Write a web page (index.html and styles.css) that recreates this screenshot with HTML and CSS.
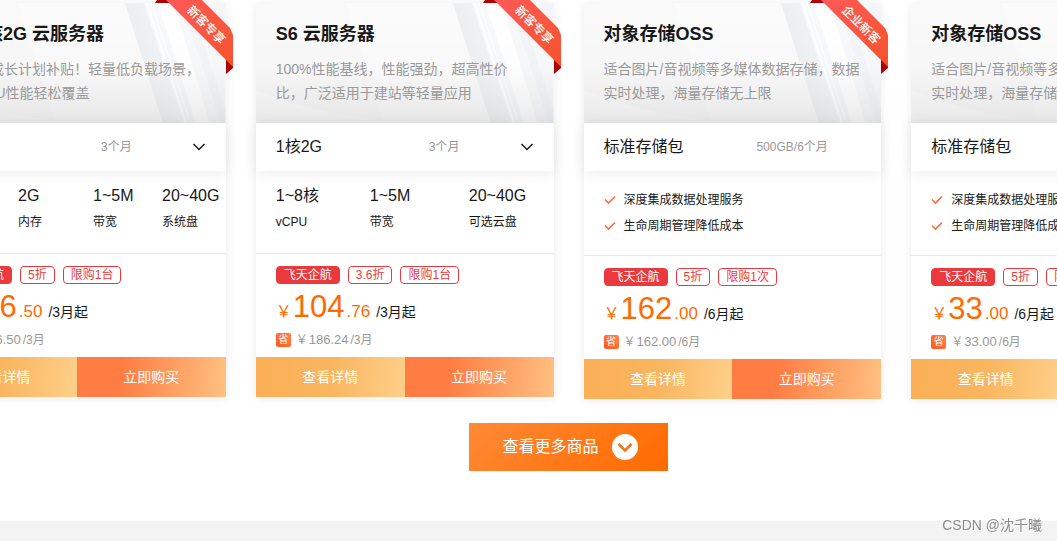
FILE: index.html
```html
<!DOCTYPE html>
<html lang="zh-CN">
<head>
<meta charset="utf-8">
<meta name="viewport" content="width=device-width, initial-scale=1">
<title>云产品特惠</title>
<link rel="stylesheet" href="styles.css">
</head>
<body>
<svg class="sprite" aria-hidden="true">
  <defs>
    <linearGradient id="fade" x1="0" y1="0" x2="0" y2="1"><stop offset="0" stop-color="#000" stop-opacity="0"/><stop offset=".55" stop-color="#000" stop-opacity=".01"/><stop offset="1" stop-color="#000" stop-opacity=".08"/></linearGradient>
    <linearGradient id="band"><stop offset="0" stop-color="#eceef0"/><stop offset="1" stop-color="#f5f6f8"/></linearGradient>
    <linearGradient id="red" x1="0" y1="0" x2="1" y2="1"><stop offset="0" stop-color="#ff5a5a"/><stop offset="1" stop-color="#f5532d"/></linearGradient>
    <symbol id="sheen" viewBox="0 0 298 120" preserveAspectRatio="none">
      <path d="M0 0H298V120H0Z" fill="#f9f9f9"/>
      <path d="M90 0H298V120H128Z" fill="#fbfbfb"/>
      <path d="M0 87Q60 112 150 120H0Z" fill="#fcfcfc"/>
      <path d="M197 0H216L256 120H235Z" fill="url(#band)"/>
      <path d="M216 0H298V120H256Z" fill="#f8f9fb"/>
      <path d="M218 0H220L259 120H257ZM223 0H224L263 120H262ZM230 0H246L282 120H268Z" fill="#fff"/>
      <path d="M254 0H262L298 108V120H293ZM284 0H298V36Z" fill="#f3f5f8"/>
      <path d="M0 0H298V120H0Z" fill="url(#fade)"/>
    </symbol>
    <symbol id="ribbon" viewBox="0 0 78 78">
      <path d="M0 6L4 0H14V6ZM71 62V77L78 71V66Z" fill="#b00000"/>
      <path d="M8 0H44L75 31L78 38V70Z" fill="url(#red)"/>
    </symbol>
    <symbol id="down" viewBox="0 0 14 8"><path d="M1.500 1L7 6.500L12.500 1" fill="none" stroke="currentColor" stroke-width="1.500"/></symbol>
    <symbol id="tick" viewBox="0 0 12 10"><path d="M1 4.500L4.500 8L11 1.500" fill="none" stroke="#ff6a3a" stroke-width="1.600"/></symbol>
  </defs>
</svg>
<main class="promo">
  <div class="stage">
    <div class="cards">
      <article class="card">
        <header class="head">
          <svg class="sheen" aria-hidden="true"><use href="#sheen"/></svg>
          <h2 class="title">S6 1核2G 云服务器</h2>
          <p class="desc">开发者成长计划补贴！轻量低负载场景，<br>满足CPU性能轻松覆盖</p>
          <div class="corner"><svg class="ribbon" aria-hidden="true"><use href="#ribbon"/></svg><span class="corner-text">新客专享</span></div>
        </header>
        <button class="config" type="button"><span class="model">1核2G</span><span class="term">3个月</span><svg class="down" aria-hidden="true"><use href="#down"/></svg></button>
        <dl class="specs specs-fixed">
          <div><dt>1核</dt><dd>vCPU</dd></div><div><dt>2G</dt><dd>内存</dd></div><div><dt>1~5M</dt><dd>带宽</dd></div><div><dt>20~40G</dt><dd>系统盘</dd></div>
        </dl>
        <div class="offer">
          <div class="tags"><span class="tag tag-solid">飞天企航</span><span class="tag">5折</span><span class="tag">限购1台</span></div>
          <p class="price"><span class="yen">￥</span><span class="whole">126</span><span class="cents">.50</span><span class="per">/3月起</span></p>
          <p class="saving"><span class="save">省</span><span>￥</span><span class="was">126.50</span><span>/3月</span></p>
        </div>
        <div class="actions"><button class="detail" type="button">查看详情</button><button class="buy" type="button">立即购买</button></div>
      </article>

      <article class="card">
        <header class="head">
          <svg class="sheen" aria-hidden="true"><use href="#sheen"/></svg>
          <h2 class="title">S6 云服务器</h2>
          <p class="desc">100%性能基线，性能强劲，超高性价<br>比，广泛适用于建站等轻量应用</p>
          <div class="corner"><svg class="ribbon" aria-hidden="true"><use href="#ribbon"/></svg><span class="corner-text">新客专享</span></div>
        </header>
        <button class="config" type="button"><span class="model">1核2G</span><span class="term">3个月</span><svg class="down" aria-hidden="true"><use href="#down"/></svg></button>
        <dl class="specs specs-range">
          <div><dt>1~8核</dt><dd>vCPU</dd></div><div><dt>1~5M</dt><dd>带宽</dd></div><div><dt>20~40G</dt><dd>可选云盘</dd></div>
        </dl>
        <div class="offer">
          <div class="tags"><span class="tag tag-solid">飞天企航</span><span class="tag">3.6折</span><span class="tag">限购1台</span></div>
          <p class="price"><span class="yen">￥</span><span class="whole">104</span><span class="cents">.76</span><span class="per">/3月起</span></p>
          <p class="saving"><span class="save">省</span><span>￥</span><span class="was">186.24</span><span>/3月</span></p>
        </div>
        <div class="actions"><button class="detail" type="button">查看详情</button><button class="buy" type="button">立即购买</button></div>
      </article>

      <article class="card">
        <header class="head">
          <svg class="sheen" aria-hidden="true"><use href="#sheen"/></svg>
          <h2 class="title">对象存储OSS</h2>
          <p class="desc">适合图片/音视频等多媒体数据存储，数据<br>实时处理，海量存储无上限</p>
          <div class="corner"><svg class="ribbon" aria-hidden="true"><use href="#ribbon"/></svg><span class="corner-text">企业新客</span></div>
        </header>
        <div class="config"><span class="model">标准存储包</span><span class="term">500GB/6个月</span></div>
        <ul class="features">
          <li><svg class="tick" aria-hidden="true"><use href="#tick"/></svg>深度集成数据处理服务</li>
          <li><svg class="tick" aria-hidden="true"><use href="#tick"/></svg>生命周期管理降低成本</li>
        </ul>
        <div class="offer">
          <div class="tags"><span class="tag tag-solid">飞天企航</span><span class="tag">5折</span><span class="tag">限购1次</span></div>
          <p class="price"><span class="yen">￥</span><span class="whole">162</span><span class="cents">.00</span><span class="per">/6月起</span></p>
          <p class="saving"><span class="save">省</span><span>￥</span><span class="was">162.00</span><span>/6月</span></p>
        </div>
        <div class="actions"><button class="detail" type="button">查看详情</button><button class="buy" type="button">立即购买</button></div>
      </article>

      <article class="card">
        <header class="head">
          <svg class="sheen" aria-hidden="true"><use href="#sheen"/></svg>
          <h2 class="title">对象存储OSS</h2>
          <p class="desc">适合图片/音视频等多媒体数据存储，数据<br>实时处理，海量存储无上限</p>
        </header>
        <div class="config"><span class="model">标准存储包</span></div>
        <ul class="features">
          <li><svg class="tick" aria-hidden="true"><use href="#tick"/></svg>深度集成数据处理服务</li>
          <li><svg class="tick" aria-hidden="true"><use href="#tick"/></svg>生命周期管理降低成本</li>
        </ul>
        <div class="offer">
          <div class="tags"><span class="tag tag-solid">飞天企航</span><span class="tag">5折</span><span class="tag">限购1次</span></div>
          <p class="price"><span class="yen">￥</span><span class="whole">33</span><span class="cents">.00</span><span class="per">/6月起</span></p>
          <p class="saving"><span class="save">省</span><span>￥</span><span class="was">33.00</span><span>/6月</span></p>
        </div>
        <div class="actions"><button class="detail" type="button">查看详情</button><button class="buy" type="button">立即购买</button></div>
      </article>
    </div>
    <button class="more" type="button">查看更多商品
      <svg class="more-icon" viewBox="0 0 26 26" aria-hidden="true"><circle cx="13" cy="13" r="13" fill="#fff"/><path d="M6.500 10L13 16.500L19.500 10" fill="none" stroke="#ff6f10" stroke-width="2.500"/></svg>
    </button>
  </div>
</main>
<span class="watermark">CSDN @沈千曦</span>
</body>
</html>
```
FILE: styles.css
```css
* { box-sizing: border-box; }
body {
  margin: 0;
  min-height: 100vh;
  background: #f3f3f3;
  color: #181818;
  font: 12px/20px "Liberation Sans", "Noto Sans CJK SC", sans-serif;
}
h2, p, dl, dd, ul { margin: 0; padding: 0; }
button { border: 0; padding: 0; color: inherit; font: inherit; cursor: pointer; }
.sprite { position: absolute; width: 0; height: 0; }

.promo { overflow: hidden; background: #fff; }
.stage {
  display: flex;
  flex-direction: column;
  align-items: center;
  gap: 24px;
  margin: 0 -152px 0 -72px;
  padding: 3px 0 50px;
}
.cards {
  display: grid;
  grid-template-columns: repeat(4, minmax(0, 1fr));
  align-items: start;
  gap: 30px;
  width: 100%;
}
.card { background: #fff; box-shadow: 0 1px 10px rgba(0, 0, 0, .08); }

.head { position: relative; padding: 18px 20px; white-space: nowrap; }
.sheen { position: absolute; inset: 0; width: 100%; height: 100%; }
.title { position: relative; margin-bottom: 10px; font-size: 18px; line-height: 26px; }
.desc { position: relative; color: #999; font-size: 14px; line-height: 24px; }
.corner { position: absolute; top: -6px; right: -7px; width: 78px; height: 78px; }
.ribbon { display: block; width: 100%; height: 100%; }
.corner-text {
  position: absolute;
  top: 18px;
  left: 27px;
  color: #fff;
  font-weight: 500;
  line-height: 20px;
  transform: rotate(45deg);
}

.config {
  position: relative;
  display: grid;
  grid-template-columns: 153px 1fr auto;
  align-items: center;
  width: 100%;
  height: 48px;
  padding: 0 20px;
  background: #fff;
  box-shadow: 0 2px 14px rgba(0, 0, 0, .08);
  text-align: left;
}
.model { font-size: 16px; }
.term { color: #999; }
.down { width: 14px; height: 8px; }

.specs { display: grid; padding: 13px 0 21px 20px; border-bottom: 1px solid #ebebeb; }
.specs-fixed { grid-template-columns: 70px 75px 69px 1fr; }
.specs-range { grid-template-columns: 94px 99px 1fr; }
.specs dt { margin-bottom: 4px; font-size: 16px; line-height: 24px; }

.features { padding: 16px 20px; border-bottom: 1px solid #ebebeb; list-style: none; line-height: 26px; }
.features li { display: flex; align-items: center; gap: 8px; }
.tick { width: 12px; height: 10px; }

.offer { padding: 12px 20px 7px; white-space: nowrap; }
.tags { display: flex; gap: 8px; }
.tag {
  height: 18px;
  padding: 0 7px;
  border: 1px solid #eb3a3d;
  border-radius: 4px;
  color: #eb3a3d;
  line-height: 17px;
}
.tag-solid { background: #eb3a3d; color: #fff; }
.price { display: flex; align-items: baseline; height: 36px; margin: 5px 0; color: #ff6a00; line-height: 36px; }
.yen { margin-right: 1px; font-size: 16px; }
.whole { font-size: 31px; }
.cents { margin-left: 2px; font-size: 17px; }
.per { margin-left: 6px; color: #181818; font-size: 14px; }
.saving { display: flex; align-items: center; color: #999; }
.save {
  width: 15px;
  height: 14px;
  margin-right: 5px;
  border-radius: 2px;
  background: linear-gradient(45deg, #ff5722, #ff8548);
  color: #fff;
  font-size: 10px;
  line-height: 14px;
  text-align: center;
}
.was { margin: 0 2px 0 1px; font-size: 13px; }
.actions { display: grid; grid-template-columns: 1fr 1fr; height: 40px; color: #fff; font-size: 14px; }
.detail { background: linear-gradient(98deg, #fbaf56, #f9b55f 50%, #ffd08a); }
.buy { background: linear-gradient(98deg, #ff7d43 30%, #ffc182); }

.more {
  display: flex;
  align-items: center;
  gap: 13px;
  height: 48px;
  padding: 0 30px 0 33px;
  background: linear-gradient(135deg, #ff8a35, #ff6a00);
  color: #fff;
  font-size: 16px;
}
.more-icon { width: 26px; height: 26px; }
.watermark {
  position: fixed;
  right: 15px;
  bottom: 6px;
  color: #8c8c8c;
  font-size: 14px;
  text-shadow: 1px 1px 0 #fff;
}
```
